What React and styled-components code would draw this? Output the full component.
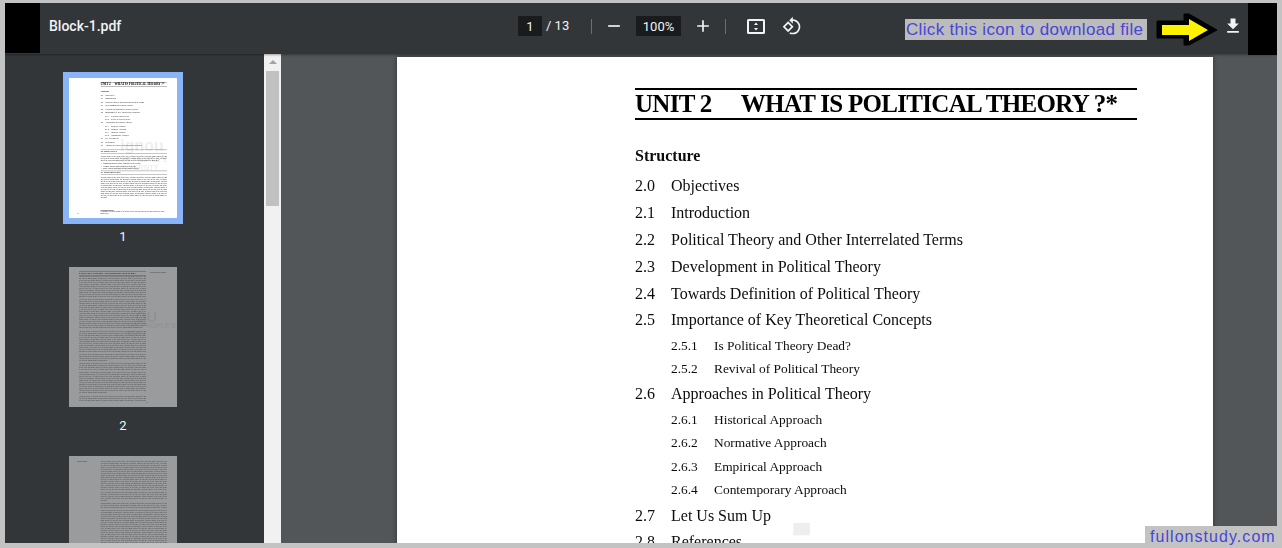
import styled, { createGlobalStyle } from "styled-components";

const GlobalStyle = createGlobalStyle`
    html, body {
        margin: 0;
        padding: 0;
        height: 100%;
        overflow: hidden;
        background: #c3c3c3;
    }
    * {
        box-sizing: border-box;
    }
`;

const Shell = styled.div`
    position: relative;
    width: 1282px;
    height: 548px;
    padding: 3px 5px 5px;
    overflow: hidden;
    font-family: Roboto, "Liberation Sans", sans-serif;
`;

const Viewer = styled.div`
    display: flex;
    flex-direction: column;
    height: 540px;
    background: #323639;
    overflow: hidden;
`;

/* toolbar */
const Toolbar = styled.header`
    position: relative;
    z-index: 2;
    display: flex;
    align-items: center;
    flex: 0 0 51px;
    height: 51px;
    background: #323639;
    color: #f1f3f4;
    box-shadow: 0 1px 2px rgba(0, 0, 0, 0.35);
`;

const MaskBlock = styled.div`
    flex: 0 0 ${(p) => p.$width}px;
    align-self: flex-start;
    height: ${(p) => p.$height}px;
    margin-left: ${(p) => (p.$end ? "auto" : "0")};
    background: #000;
`;

const Title = styled.div`
    flex: 0 0 478px;
    padding-left: 9px;
    padding-bottom: 5px;
    font-size: 14px;
    font-weight: 500;
`;

const Field = styled.div`
    display: flex;
    align-items: center;
    justify-content: center;
    width: ${(p) => p.$width}px;
    height: 20px;
    margin-left: ${(p) => p.$gap || 0}px;
    margin-bottom: 5px;
    background: #191b1c;
    font-size: 13px;
`;

const PageCount = styled.div`
    width: 24px;
    margin-left: 4px;
    margin-bottom: 7px;
    font-size: 13px;
    white-space: nowrap;
`;

const Divider = styled.div`
    flex: 0 0 1px;
    height: 15px;
    margin-left: ${(p) => p.$gap}px;
    margin-bottom: 5px;
    background: #6b6f72;
`;

const ToolIcon = styled.svg`
    flex: none;
    margin-left: ${(p) => p.$gap}px;
    margin-bottom: ${(p) => p.$lift ?? 5}px;
    fill: ${(p) => p.$fill || "#f1f3f4"};
`;

const Hint = styled.div`
    display: flex;
    align-items: center;
    height: 21px;
    margin-left: 103px;
    margin-top: 2px;
    padding: 0 0 0 1px;
    width: 242px;
    background: #bcbcbc;
    color: #4646d8;
    font-family: "Liberation Sans", Arial, sans-serif;
    font-size: 17px;
    letter-spacing: 0.33px;
    white-space: nowrap;
`;

const PointerArrow = styled.svg`
    flex: none;
    margin-left: 9px;
    margin-top: 2px;
`;

const Workspace = styled.div`
    display: flex;
    flex: 1;
    min-height: 0;
`;

/* thumbnails */
const Sidebar = styled.aside`
    flex: 0 0 259px;
    padding: 24px 0 0 64px;
    background: #323639;
    overflow: hidden;
`;

const ThumbItem = styled.div`
    width: 108px;
    margin-bottom: 24px;
`;

const ThumbFrame = styled.div`
    width: 108px;
    height: 140px;
    overflow: hidden;
    background: #fff;
    opacity: ${(p) => (p.$active ? 1 : 0.5)};
    box-shadow: ${(p) => (p.$active ? "0 0 0 6px #8ab4f8" : "none")};
`;

const Miniature = styled.div`
    width: 816px;
    transform: scale(0.1324);
    transform-origin: 0 0;
    filter: blur(4.5px);
`;

const ThumbLabel = styled.div`
    margin-top: 13px;
    height: 12px;
    line-height: 12px;
    text-align: center;
    color: #f1f3f4;
    font-size: 13px;
`;

/* scrollbar */
const ScrollTrack = styled.div`
    flex: 0 0 17px;
    display: flex;
    flex-direction: column;
    align-items: center;
    background: #f1f1f1;
`;

const ScrollArrow = styled.div`
    width: 0;
    height: 0;
    margin-top: 6px;
    border-left: 4px solid transparent;
    border-right: 4px solid transparent;
    border-bottom: 4px solid #a3a3a3;
`;

const ScrollThumb = styled.div`
    width: 13px;
    height: 135px;
    margin-top: 7px;
    background: #c1c1c1;
`;

/* document */
const Main = styled.main`
    flex: 1;
    padding: 3px 0 0 116px;
    background: #525659;
    overflow: hidden;
`;

const SheetShadow = styled.div`
    width: 816px;
    box-shadow: 0 0 5px rgba(0, 0, 0, 0.4);
`;

const Sheet = styled.div`
    position: relative;
    display: grid;
    grid-template-columns: ${(p) => (p.$even ? "506px 1fr" : "178px 502px")};
    grid-template-rows: 1fr auto;
    column-gap: 0;
    width: 816px;
    height: 1058px;
    padding: 31px 76px 28px ${(p) => (p.$even ? 76 : 60)}px;
    background: #fff;
    color: #0c0c0c;
    font-family: "Liberation Serif", "Times New Roman", serif;
    overflow: hidden;
`;

const Column = styled.div`
    position: relative;
    min-width: 0;
    overflow: hidden;
    filter: blur(0.25px);
`;

const RunningHead = styled.div`
    padding: ${(p) => (p.$even ? "4px 0 0 30px" : "4px 0 0 0")};
    font-size: 12px;
    white-space: nowrap;
`;

const UnitHeading = styled.h1`
    display: flex;
    align-items: center;
    height: 32px;
    margin: 0;
    border-top: 2px solid #000;
    border-bottom: 2px solid #000;
    font-size: 25px;
    font-weight: 700;
    white-space: nowrap;
    color: #000;
    letter-spacing: -0.7px;
`;

const UnitName = styled.span`
    margin-left: 29px;
`;

const EvenHeading = styled.span`
    font-size: 16px;
    letter-spacing: 0;
`;

const SectionHeading = styled.h2`
    display: flex;
    align-items: center;
    height: ${(p) => p.$height || 30}px;
    margin: ${(p) => p.$top || 16}px 0 12px;
    border-top: 2px solid #222;
    border-bottom: 2px solid #222;
    font-size: 16px;
    font-weight: 700;
`;

const Structure = styled.div`
    height: 20px;
    line-height: 20px;
    margin: 26px 0 7px;
    font-size: 16px;
    font-weight: 700;
`;

const Entry = styled.div`
    display: flex;
    align-items: center;
    height: ${(p) => (p.$sub ? 23.6 : 26.8)}px;
    padding-left: ${(p) => (p.$sub ? 36 : 0)}px;
    font-size: ${(p) => (p.$sub ? 13.4 : 16)}px;
    white-space: nowrap;
`;

const EntryNumber = styled.span`
    flex: 0 0 ${(p) => (p.$sub ? 43 : 36)}px;
`;

const Paragraph = styled.p`
    margin: 0 0 ${(p) => p.$after ?? 12}px;
    color: ${(p) => (p.$soft ? "#3a3a3a" : "inherit")};
    font-size: 13.5px;
    line-height: 15.5px;
    text-align: justify;
`;

const BulletList = styled.ul`
    margin: 0 0 8px;
    padding-left: 18px;
    font-size: 13.5px;
    line-height: 19px;
`;

const Folio = styled.div`
    align-self: end;
    font-size: 12px;
`;

const Footnote = styled.div`
    font-size: 11px;
    line-height: 13px;
    &::before {
        content: "";
        display: block;
        width: 100px;
        height: 3px;
        margin-bottom: 4px;
        background: #000;
    }
`;

const Watermark = styled.div`
    position: absolute;
    left: ${(p) => p.$left}px;
    top: ${(p) => p.$top}px;
    color: #eeeeee;
    font-family: "Liberation Sans", Arial, sans-serif;
    font-size: ${(p) => p.$size}px;
    font-weight: 700;
    line-height: 1;
    white-space: nowrap;
`;

const Badge = styled.div`
    position: absolute;
    right: 0;
    bottom: 0;
    width: 137px;
    height: 22px;
    padding-left: 5px;
    background: #c3c3c3;
    color: #4646d8;
    font-family: "Liberation Sans", Arial, sans-serif;
    font-size: 16px;
    line-height: 22px;
    letter-spacing: 1.05px;
    white-space: nowrap;
`;

const toc = [
    { n: "2.0", t: "Objectives" },
    { n: "2.1", t: "Introduction" },
    { n: "2.2", t: "Political Theory and Other Interrelated Terms" },
    { n: "2.3", t: "Development in Political Theory" },
    { n: "2.4", t: "Towards Definition of Political Theory" },
    { n: "2.5", t: "Importance of Key Theoretical Concepts" },
    { n: "2.5.1", t: "Is Political Theory Dead?", sub: true },
    { n: "2.5.2", t: "Revival of Political Theory", sub: true },
    { n: "2.6", t: "Approaches in Political Theory" },
    { n: "2.6.1", t: "Historical Approach", sub: true },
    { n: "2.6.2", t: "Normative Approach", sub: true },
    { n: "2.6.3", t: "Empirical Approach", sub: true },
    { n: "2.6.4", t: "Contemporary Approach", sub: true },
    { n: "2.7", t: "Let Us Sum Up" },
    { n: "2.8", t: "References" },
    { n: "2.9", t: "Answers to Check Your Progress Exercises" },
];

const prose =
    "Political theory is the study of the state, of power and of the ideas that shape public life and the ways in which people are governed. ";

const FirstPage = () => (
    <Sheet>
        <Watermark $left={388} $top={452} $size={120}>ignou</Watermark>
        <Watermark $left={362} $top={590} $size={52}>THE PEOPLE'S</Watermark>
        <Watermark $left={362} $top={650} $size={52}>UNIVERSITY</Watermark>
        <div />
        <Column>
            <UnitHeading>
                UNIT 2<UnitName>WHAT IS POLITICAL THEORY ?*</UnitName>
            </UnitHeading>
            <Structure>Structure</Structure>
            {toc.map((row) => (
                <Entry key={row.n} $sub={row.sub}>
                    <EntryNumber $sub={row.sub}>{row.n}</EntryNumber>
                    {row.t}
                </Entry>
            ))}
            <SectionHeading>2.0 OBJECTIVES</SectionHeading>
            <Paragraph $after={6}>{prose.repeat(2)}</Paragraph>
            <BulletList>
                <li>Distinguish political theory from other related terms;</li>
                <li>Examine whether political theory is dead; and</li>
                <li>Know various approaches to study political theory.</li>
            </BulletList>
            <SectionHeading $top={6}>2.1 INTRODUCTION</SectionHeading>
            <Paragraph>{prose.repeat(7)}</Paragraph>
        </Column>
        <Folio>18</Folio>
        <Footnote>
            * Contributed by a faculty member of the School of Social Sciences, and revised for this
            edition of the course material, 2017.
        </Footnote>
    </Sheet>
);

const EvenPage = () => (
    <Sheet $even>
        <Watermark $left={500} $top={320} $size={110}>OU</Watermark>
        <Watermark $left={430} $top={420} $size={52}>THE PEOPLE'S</Watermark>
        <Watermark $left={430} $top={480} $size={52}>RSITY</Watermark>
        <Column>
            <UnitHeading>
                <EvenHeading>2.2 POLITICAL THEORY AND OTHER RELATED TERMS</EvenHeading>
            </UnitHeading>
            <Paragraph $soft>{prose.repeat(18)}</Paragraph>
            <Paragraph $soft>{prose.repeat(10)}</Paragraph>
            <Paragraph $soft>{prose.repeat(10)}</Paragraph>
            <Paragraph $soft>{prose.repeat(8)}</Paragraph>
        </Column>
        <RunningHead $even>What is Political Theory?</RunningHead>
        <div />
        <Folio>19</Folio>
    </Sheet>
);

const OddPage = () => (
    <Sheet>
        <RunningHead>Political Theory</RunningHead>
        <Column>
            <Paragraph $soft>{prose.repeat(13)}</Paragraph>
            <Paragraph $soft>{prose.repeat(18)}</Paragraph>
            <Paragraph $soft>{prose.repeat(12)}</Paragraph>
        </Column>
    </Sheet>
);

const thumbs = [
    { n: 1, Page: FirstPage, active: true },
    { n: 2, Page: EvenPage },
    { n: 3, Page: OddPage },
];

const App = () => {
    return (
        <>
            <GlobalStyle />
            <Shell>
                <Viewer>
                    <Toolbar>
                        <MaskBlock $width={35} $height={50} />
                        <Title>Block-1.pdf</Title>
                        <Field $width={24}>1</Field>
                        <PageCount>/ 13</PageCount>
                        <Divider $gap={21} />
                        <ToolIcon $gap={12} width="20" height="20" viewBox="0 0 24 24">
                            <path d="M19 13H5v-2h14v2z" />
                        </ToolIcon>
                        <Field $width={45} $gap={12}>100%</Field>
                        <ToolIcon $gap={12} width="20" height="20" viewBox="0 0 24 24">
                            <path d="M19 13h-6v6h-2v-6H5v-2h6V5h2v6h6v2z" />
                        </ToolIcon>
                        <Divider $gap={12} />
                        <ToolIcon $gap={21} width="18" height="15" viewBox="0 0 18 15">
                            <path
                                fillRule="evenodd"
                                d="M1.500 0h15A1.500 1.500 0 0 1 18 1.500v12a1.500 1.500 0 0 1-1.500 1.500h-15A1.500 1.500 0 0 1 0 13.500v-12A1.500 1.500 0 0 1 1.500 0zM2 2v11h14V2H2z"
                            />
                            <path d="M9 3.600l2 2.400H7l2-2.400zM9 11.400L7 9h4l-2 2.400z" />
                        </ToolIcon>
                        <ToolIcon $gap={17} width="20" height="20" viewBox="0 0 24 24">
                            <path d="M7.34 6.410.86 12.900l6.490 6.480 6.490-6.480-6.500-6.490zM3.690 12.900l3.660-3.660L11 12.900l-3.660 3.660-3.650-3.660zm15.670-6.260C17.610 4.880 15.300 4 13 4V.76L8.760 5 13 9.240V6c1.790 0 3.580.68 4.950 2.050 2.730 2.730 2.730 7.170 0 9.900C16.580 19.320 14.790 20 13 20c-.97 0-1.940-.21-2.840-.61l-1.490 1.490C10.020 21.620 11.510 22 13 22c2.300 0 4.610-.88 6.360-2.640 3.520-3.510 3.520-9.210 0-12.720z" />
                        </ToolIcon>
                        <Hint>Click this icon to download file</Hint>
                        <PointerArrow width="62" height="33" viewBox="0 0 62 33">
                            <polygon
                                points="1,8 28,8 28,1 33,1 61,17 33,32 28,32 28,25 1,25"
                                fill="#000"
                                stroke="#000"
                                strokeLinejoin="round"
                            />
                            <polygon points="6,12 33,12 33,6 52,17 33,28 33,22 6,22" fill="#fff200" />
                        </PointerArrow>
                        <ToolIcon $gap={5} width="20" height="20" viewBox="0 0 24 24" $lift={6}>
                            <path d="M19 9h-4V3H9v6H5l7 7 7-7zM5 18v2h14v-2H5z" />
                        </ToolIcon>
                        <MaskBlock $width={29} $height={52} $end />
                    </Toolbar>
                    <Workspace>
                        <Sidebar>
                            {thumbs.map(({ n, Page, active }) => (
                                <ThumbItem key={n}>
                                    <ThumbFrame $active={active}>
                                        <Miniature>
                                            <Page />
                                        </Miniature>
                                    </ThumbFrame>
                                    <ThumbLabel>{n}</ThumbLabel>
                                </ThumbItem>
                            ))}
                        </Sidebar>
                        <ScrollTrack>
                            <ScrollArrow />
                            <ScrollThumb />
                        </ScrollTrack>
                        <Main>
                            <SheetShadow>
                                <FirstPage />
                            </SheetShadow>
                        </Main>
                    </Workspace>
                </Viewer>
                <Badge>fullonstudy.com</Badge>
            </Shell>
        </>
    );
};

export default App;
